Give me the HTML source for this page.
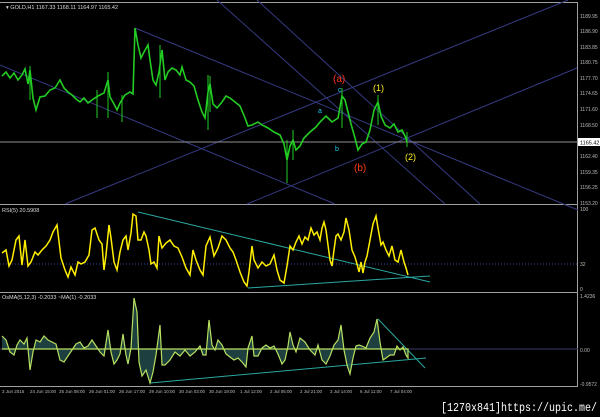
<!DOCTYPE html>
<html><head><meta charset="utf-8"><style>
body{margin:0;background:#000;width:600px;height:417px;overflow:hidden;font-family:"Liberation Sans",sans-serif}
svg{position:absolute;left:0;top:0}
</style></head><body>
<svg width="600" height="417" viewBox="0 0 600 417" xmlns="http://www.w3.org/2000/svg" font-family="Liberation Sans, sans-serif">
<rect width="600" height="417" fill="#000"/>
<g stroke="#a0a0a0" stroke-width="1" fill="none">
<line x1="0" y1="2.5" x2="578" y2="2.5"/>
<line x1="0" y1="204.5" x2="578" y2="204.5"/>
<line x1="0" y1="292.5" x2="578" y2="292.5"/>
<line x1="0" y1="386.5" x2="578" y2="386.5"/>
<line x1="577.5" y1="2" x2="577.5" y2="387"/>
</g>
<g stroke="#353a80" stroke-width="1" fill="none">
<line x1="135" y1="28" x2="578" y2="210"/>
<line x1="0" y1="65" x2="335" y2="204"/>
<line x1="65" y1="204" x2="568" y2="0"/>
<line x1="247" y1="204" x2="577" y2="68"/>
<line x1="217" y1="0" x2="445" y2="204"/>
<line x1="257" y1="0" x2="480" y2="204"/>
</g>
<line x1="0" y1="142" x2="578" y2="142" stroke="#909090" stroke-width="1"/>
<rect x="578" y="138" width="22" height="8" fill="#fff"/>
<text x="580" y="144.5" font-size="5.5" fill="#000">1165.42</text>
<polyline fill="none" stroke="#22cc22" stroke-width="1.6" points="2,76 6,72 10,78 14,73 18,80 22,75 25,69 28,84 30,70 33,98 36,110 40,97 45,96 50,90 55,88 60,80 64,88 68,92 72,95 76,99 80,102 84,98 88,103 92,100 98,96 104,93 108,80 110,97 114,104 117,110 120,103 125,95 130,92 133,94 135,28 138,45 141,58 144,52 148,45 150,60 153,80 156,85 159,72 162,50 165,80 168,72 172,68 176,70 180,75 182,67 186,80 190,82 194,86 198,100 202,112 205,118 208,92 210,84 213,104 217,108 222,102 226,96 230,98 235,102 240,106 245,118 248,126 252,125 258,122 262,125 268,128 274,132 280,135 284,144 287,160 290,146 293,140 296,150 300,146 304,138 310,132 316,127 320,122 326,116 332,122 338,118 342,96 345,100 348,112 351,124 355,138 358,150 362,144 366,142 370,130 374,110 378,102 381,116 385,125 390,128 394,124 398,132 402,130 405,136 407,142"/>
<g stroke="#22cc22" stroke-width="1">
<line x1="30" y1="66" x2="30" y2="100"/><line x1="97" y1="90" x2="97" y2="118"/>
<line x1="108" y1="72" x2="108" y2="118"/><line x1="160" y1="45" x2="160" y2="98"/>
<line x1="208" y1="75" x2="208" y2="130"/><line x1="287" y1="140" x2="287" y2="183"/>
<line x1="293" y1="130" x2="293" y2="160"/><line x1="342" y1="88" x2="342" y2="128"/>
<line x1="378" y1="95" x2="378" y2="125"/><line x1="407" y1="132" x2="407" y2="147"/>
<line x1="122" y1="95" x2="122" y2="122"/><line x1="210" y1="76" x2="210" y2="112"/>
</g>
<text x="6" y="9" font-size="5.5" fill="#ddd">▾ GOLD,H1  1167.33 1168.11 1164.97 1165.42</text>
<text x="333" y="82" font-size="10" fill="#ff3a1a">(a)</text>
<text x="338" y="92" font-size="7" fill="#22ccee">c</text>
<text x="318" y="113" font-size="7" fill="#22ccee">a</text>
<text x="335" y="151" font-size="7" fill="#22ccee">b</text>
<text x="354" y="171" font-size="10" fill="#ff3a1a">(b)</text>
<text x="373" y="91" font-size="9" fill="#ffee22">(1)</text>
<text x="405" y="160" font-size="9" fill="#ffee22">(2)</text>
<g font-size="5" fill="#bbb">
<text x="580" y="18">1189.95</text><text x="580" y="33">1186.90</text><text x="580" y="49">1183.85</text>
<text x="580" y="64">1180.75</text><text x="580" y="80">1177.70</text><text x="580" y="95">1174.65</text>
<text x="580" y="111">1171.60</text><text x="580" y="127">1168.50</text><text x="580" y="158">1162.40</text>
<text x="580" y="174">1159.35</text><text x="580" y="189">1156.25</text><text x="580" y="205">1153.20</text>
<text x="580" y="211">100</text><text x="580" y="266">32</text><text x="580" y="291">0</text>
<text x="580" y="298">1.4236</text><text x="580" y="352">0.00</text><text x="580" y="386">-0.9572</text>
</g>
<text x="2" y="212" font-size="5.5" fill="#ddd">RSI(5) 20.5908</text>
<line x1="0" y1="264" x2="578" y2="264" stroke="#3a4a9a" stroke-dasharray="1,2"/>
<g stroke="#2aa8a0" stroke-width="1" fill="none">
<line x1="138" y1="212" x2="430" y2="282"/>
<line x1="248" y1="288" x2="430" y2="276"/>
</g>
<polyline fill="none" stroke="#ffee00" stroke-width="1.5" points="2,253 6,250 9,266 12,260 16,240 19,236 22,265 25,240 28,266 31,262 35,252 38,255 42,250 46,246 50,240 53,232 57,225 61,258 65,270 68,277 71,267 75,275 78,262 81,264 85,262 89,255 92,230 95,228 99,240 102,244 104,270 106,255 109,225 111,238 114,262 117,270 120,252 123,240 126,236 128,250 131,233 133,214 136,216 138,240 141,240 144,232 146,236 149,250 151,264 154,262 157,268 159,236 162,248 166,243 170,240 174,246 178,248 182,257 186,268 190,275 193,250 196,260 200,270 203,275 206,246 210,237 214,256 218,248 222,236 226,240 230,248 233,252 236,260 240,272 244,282 247,286 249,272 252,246 254,260 258,268 262,262 266,266 270,264 274,255 277,270 280,280 284,283 287,266 290,246 293,250 296,242 299,236 302,244 305,237 308,240 311,228 314,235 317,232 320,240 322,228 324,222 326,230 328,245 330,260 332,266 334,250 336,236 338,234 341,240 344,232 346,218 349,230 352,250 355,257 357,264 359,272 361,262 363,273 365,262 367,256 370,240 373,224 376,216 378,228 381,245 383,242 386,250 389,256 392,246 395,260 398,262 401,250 404,262 406,268 408,275"/>
<text x="2" y="299" font-size="5.5" fill="#ddd">OsMA(5,12,3) -0.2033   ~MA(1) -0.2033</text>
<line x1="0" y1="349" x2="578" y2="349" stroke="#3a3a6a" stroke-width="1"/>
<g stroke="#2aa8a0" stroke-width="1" fill="none">
<line x1="150" y1="383" x2="426" y2="358"/>
<line x1="378" y1="319" x2="425" y2="368"/>
</g>
<polyline fill="#2a5a5a" fill-opacity="0.7" stroke="#b8e060" stroke-width="1.2" points="2,336 6,340 10,352 14,355 17,345 20,340 24,344 27,338 30,370 33,352 36,340 40,342 44,336 48,340 52,342 56,344 60,360 64,362 68,356 72,350 76,344 80,342 84,348 88,346 92,340 96,346 100,352 104,356 108,330 111,352 114,364 117,360 120,354 123,334 126,355 128,364 131,348 134,298 137,312 139,362 142,376 146,370 150,383 153,372 156,355 160,325 162,365 165,365 170,360 175,352 180,356 185,350 190,356 195,352 200,346 203,355 206,355 209,320 212,345 215,350 218,340 222,345 226,354 230,357 234,360 238,358 242,362 246,367 248,348 252,336 254,356 258,356 262,348 266,345 270,348 274,346 278,354 282,364 285,360 288,346 290,332 293,345 296,352 300,338 305,342 310,350 315,355 318,345 322,360 326,364 330,356 334,345 338,340 341,325 344,350 347,365 350,374 353,358 356,346 359,345 362,346 366,348 370,338 374,332 377,319 380,342 383,360 386,358 390,355 394,355 397,346 400,350 403,347 406,355 408,358 408,349 2,349"/>
<g font-size="4.5" fill="#bbb">
<text x="2" y="393">3 Jun 2015</text><text x="30" y="393">24 Jun 15:00</text><text x="59" y="393">25 Jun 08:00</text>
<text x="89" y="393">26 Jun 01:00</text><text x="119" y="393">26 Jun 17:00</text><text x="149" y="393">29 Jun 10:00</text>
<text x="179" y="393">30 Jun 03:00</text><text x="209" y="393">30 Jun 19:00</text><text x="240" y="393">1 Jul 12:00</text>
<text x="270" y="393">2 Jul 05:00</text><text x="300" y="393">2 Jul 21:00</text><text x="330" y="393">3 Jul 14:00</text>
<text x="360" y="393">6 Jul 11:00</text><text x="390" y="393">7 Jul 04:00</text>
</g>
<text x="441" y="411" font-size="12" fill="#fff" font-family="Liberation Mono, monospace" textLength="156" lengthAdjust="spacingAndGlyphs">[1270x841]https://upic.me/</text>
</svg>
</body></html>
